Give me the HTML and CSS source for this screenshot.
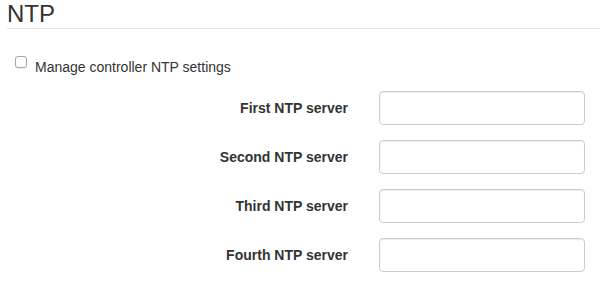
FILE: index.html
```html
<!DOCTYPE html>
<html lang="en">
<head>
    <meta charset="UTF-8">
    <title>NTP</title>
    <link rel="stylesheet" href="styles.css">
</head>
<body>
    <div class="section">
        <h3 class="title">NTP</h3>

        <label class="check">
            <input type="checkbox" id="manage-ntp">
            <span>Manage controller NTP settings</span>
        </label>

        <div class="form">
            <label class="control-label" for="ntp1">First NTP server</label>
            <input class="form-control" type="text" id="ntp1">

            <label class="control-label" for="ntp2">Second NTP server</label>
            <input class="form-control" type="text" id="ntp2">

            <label class="control-label" for="ntp3">Third NTP server</label>
            <input class="form-control" type="text" id="ntp3">

            <label class="control-label" for="ntp4">Fourth NTP server</label>
            <input class="form-control" type="text" id="ntp4">
        </div>
    </div>
</body>
</html>
```

FILE: styles.css
```css
body {
    margin: 0;
    font-family: "Liberation Sans", Arial, sans-serif;
    font-size: 14px;
    line-height: 20px;
    color: #333;
    background: #fff;
}
.section {
    padding-left: 7px;
}
.title {
    margin: 0;
    font-size: 24px;
    font-weight: normal;
    line-height: 27px;
    padding-bottom: 1px;
    border-bottom: 1px solid #e5e5e5;
    color: #333;
}
.check {
    display: flex;
    align-items: flex-start;
    margin: 28px 0 0 8px;
    cursor: pointer;
}
.check input {
    appearance: none;
    -webkit-appearance: none;
    box-sizing: border-box;
    width: 12px;
    height: 12px;
    margin: -1px 8px 0 0;
    border: 1px solid #a6a6a6;
    border-radius: 3px;
    background: #fff;
    box-shadow: 0 1px 1px rgba(0, 0, 0, 0.08);
}
.check input:checked {
    background: #3b8ff6;
    border-color: #3b8ff6;
}
.form {
    display: grid;
    grid-template-columns: 341px 206px;
    column-gap: 31px;
    row-gap: 15px;
    margin-top: 14px;
}
.control-label {
    text-align: right;
    font-weight: bold;
    padding-top: 7px;
}
.form-control {
    box-sizing: border-box;
    height: 34px;
    margin: 0;
    padding: 6px 12px;
    font: inherit;
    border: 1px solid #ccc;
    border-radius: 4px;
    box-shadow: inset 0 1px 1px rgba(0, 0, 0, 0.075);
    background: #fff;
}
```
